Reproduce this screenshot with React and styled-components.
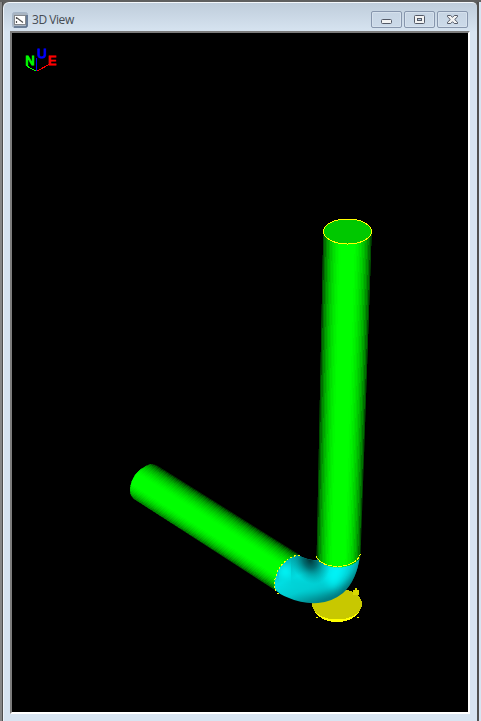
import React from "react";
import styled, { createGlobalStyle } from "styled-components";

const Global = createGlobalStyle`
  * { box-sizing: border-box; }
  body { margin: 0; background: #d7e4f1; overflow: hidden; }
`;

const Desktop = styled.div`
  display: grid;
  grid-template-columns: 3px 474px 2px 2px;
  width: 481px;
  height: 721px;
  padding-top: 2px;
  background: #5f5f5f;
`;

const Edge = styled.div`
  background: ${(p) => p.$fill};
`;

const Window = styled.section`
  display: flex;
  flex-direction: column;
  height: 719px;
  padding: 0 7px 0 6px;
  border-top: 1px solid #f4f8fc;
  border-left: 1px solid #eef3f9;
  border-radius: 6px 5px 0 0;
  background: linear-gradient(#bfcddb 0, #d7e4f1 29px);
`;

const TitleBar = styled.header`
  display: flex;
  align-items: center;
  height: 28px;
  padding: 5px 2px 0;
`;

const Title = styled.h1`
  flex: 1;
  margin: 0 0 0 4px;
  font: 400 12px/16px "Open Sans", "Noto Sans", sans-serif;
  letter-spacing: -0.45px;
  color: #454c54;
`;

const Controls = styled.div`
  display: flex;
  gap: 2px;
`;

const ControlButton = styled.button`
  display: grid;
  place-items: center;
  width: 31px;
  height: 17px;
  padding: ${(p) => p.$top || 0}px 0 0;
  border: 1px solid #8796ad;
  border-radius: 2px;
  background: linear-gradient(#c7d5e4, #ccdae9);
  box-shadow: inset 0 0 0 1px #d6e1ed;
`;

const Viewport = styled.main`
  width: 460px;
  height: 683px;
  border: 2px solid;
  border-color: #7c7c7c #fff #fff #7c7c7c;
  background: #000;
`;

const Scene = styled.svg`
  display: block;
  width: 456px;
  height: 679px;
`;

const AxisLabel = styled.text`
  font: ${(p) => p.$weight || 400} 13px "DejaVu Sans", sans-serif;
  fill: ${(p) => p.$color};
  stroke: ${(p) => p.$color};
  stroke-width: 0.8px;
`;

const mix = (a, b, t) => a + (b - a) * t;

/* Shaded cylinder, built from lengthwise strips that follow its taper. */
function Pipe({ start, end, low, peak }) {
  const count = 32;
  const strips = Array.from({ length: count }, (_, i) => {
    const a = i / count;
    const b = Math.min(1, (i + 1.4) / count);
    const m = (i + 0.5) / count;
    const d = m < peak ? (peak - m) / peak : (m - peak) / (1 - peak);
    const light = Math.min(1, 1.04 * Math.max(0, 1 - d ** 2.2) ** 0.68);
    const g = Math.round(low + (255 - low) * light);
    const at = (edge, t) => `${mix(edge[0], edge[2], t)},${mix(edge[1], edge[3], t)}`;
    return (
      <polygon
        key={i}
        points={[at(start, a), at(start, b), at(end, b), at(end, a)].join(" ")}
        fill={`rgb(0,${g},0)`}
      />
    );
  });
  return <g shapeRendering="crispEdges">{strips}</g>;
}

function AppIcon() {
  return (
    <svg width="16" height="16" viewBox="0 0 16 16" aria-hidden="true">
      <rect x=".5" y=".5" width="15" height="15" rx="2" fill="#a9b5c2" stroke="#a5b5c7" />
      <path d="M2 15h12l1-1V3" fill="none" stroke="#596f8c" strokeWidth="1.6" />
      <rect x="2.500" y="3.500" width="11" height="9" fill="#fff" stroke="#85898e" />
      <path d="M4.500 5v2M5 6l6 4.500M4.500 9v2" fill="none" stroke="#555" strokeWidth="1.2" />
    </svg>
  );
}

function MinimizeIcon() {
  return (
    <svg width="11" height="5" viewBox="0 0 11 5">
      <rect x=".5" y=".5" width="10" height="4" rx="1" fill="#f3f3f3" stroke="#535966" />
    </svg>
  );
}

function MaximizeIcon() {
  return (
    <svg width="11" height="9" viewBox="0 0 11 9">
      <rect x=".5" y=".5" width="10" height="8" rx="1" fill="#f3f3f3" stroke="#535966" />
      <rect x="3.5" y="3.5" width="4" height="2" fill="#b8cbe1" stroke="#535966" />
    </svg>
  );
}

function CloseIcon() {
  return (
    <svg width="11" height="9" viewBox="0 0 11 9">
      <path
        d="M.5.5h3.200L5.500 2.300 7.300.5h3.200v1.300L7.700 4.500l2.800 2.700v1.300H7.300L5.500 6.700 3.700 8.500H.5V7.200l2.800-2.700L.5 1.800Z"
        fill="#f3f3f3"
        stroke="#535966"
      />
    </svg>
  );
}

function PipeModel() {
  return (
    <Scene viewBox="12 33 456 679" aria-label="3D pipe model">
      <defs>
        <clipPath id="leftPipe">
          <path d="M150 464Q155 464 158 466L300 555Q276 562 275 590L134 499Q130 496 130 490Q131 472 150 464Z" />
        </clipPath>
        <clipPath id="standPipe">
          <path d="M323 232H372L360.500 556C356 571 321 571 316.500 556.500Z" />
        </clipPath>
        <clipPath id="elbow">
          <path d="M298 555Q278 561 274.500 582L275 589Q278 594 289 598Q302 604 318 603Q332 602 343 593Q357 580 360 555H317V560Q309 561 298 555Z" />
        </clipPath>
        <linearGradient id="elbowBase" gradientUnits="userSpaceOnUse" x1="292" y1="560" x2="310" y2="606">
          <stop offset="0" stopColor="#00b4b8" />
          <stop offset=".35" stopColor="#00e0e4" />
          <stop offset=".65" stopColor="#00ccd0" />
          <stop offset="1" stopColor="#007f84" />
        </linearGradient>
        <radialGradient id="crease">
          <stop offset="0" stopColor="#00373a" />
          <stop offset=".35" stopColor="#005c60" stopOpacity=".85" />
          <stop offset="1" stopColor="#009ca0" stopOpacity="0" />
        </radialGradient>
        <filter id="soft" x="-100%" y="-100%" width="300%" height="300%">
          <feGaussianBlur stdDeviation="4" />
        </filter>
      </defs>

      <g fill="none" shapeRendering="crispEdges">
        <path d="M26 65l4 3 6 3" stroke="#0f0" />
        <path d="M37 71l13-7" stroke="#f00" />
        <path d="M36.500 58v13" stroke="#00f" />
      </g>
      <AxisLabel x="25" y="65" $color="#00ff00" textLength="10" lengthAdjust="spacingAndGlyphs">N</AxisLabel>
      <AxisLabel x="37" y="57.5" $color="#0000ff" textLength="10" lengthAdjust="spacingAndGlyphs">U</AxisLabel>
      <AxisLabel x="47.500" y="65" $color="#ff0000" textLength="9" lengthAdjust="spacingAndGlyphs">E</AxisLabel>

      <g shapeRendering="crispEdges">
        <path d="M312 604c1 11 12 18 25 18s24-7 25-18Z" fill="#ff0" />
        <ellipse cx="337" cy="604" rx="25" ry="15.500" fill="#c8c800" />
        <path d="M353 590h2v-2h2v2h2v5h-6Z" fill="#d8d800" />
        <path d="M316 617.500h2M357 617.500h2" stroke="#ff0" />
      </g>

      <g clipPath="url(#leftPipe)">
        <Pipe start={[144, 457, 116, 490.5]} end={[307, 559, 279, 594]} low={15} peak={0.56} />
      </g>

      <g clipPath="url(#elbow)">
        <rect x="270" y="550" width="95" height="60" fill="url(#elbowBase)" />
        <path d="M281 574Q298 590 320 587Q345 582 350 562" fill="none" stroke="#00d0d5" strokeWidth="8" filter="url(#soft)" />
        <path d="M339 562Q338 575 328 582" fill="none" stroke="#00f4f8" strokeWidth="15" filter="url(#soft)" />
        <path d="M283 565L287 577" fill="none" stroke="#00ffff" strokeWidth="11" filter="url(#soft)" />
        <ellipse cx="310" cy="560" rx="19" ry="25" fill="url(#crease)" transform="rotate(-25 310 560)" />
        <path d="M363 556Q361 580 345 596" fill="none" stroke="#005d60" strokeWidth="7" filter="url(#soft)" />
      </g>

      <g clipPath="url(#standPipe)">
        <Pipe start={[323, 232, 372, 232]} end={[316, 570, 360.5, 570]} low={40} peak={0.5} />
      </g>
      <g fill="none" stroke="#ff0" shapeRendering="crispEdges">
        <ellipse cx="347.500" cy="231.5" rx="24" ry="12.500" fill="#00c800" />
        <path d="M316.500 556.500C321 570 356 570 360.500 554" strokeDasharray="4 1" />
        <path d="M300 555.500h-4Q278 561 274.500 582v7l4 5" strokeDasharray="2 2" />
      </g>
    </Scene>
  );
}

export default function App() {
  return (
    <>
      <Global />
      <Desktop>
        <Edge $fill="linear-gradient(90deg, #858585 2px, #4d4d4d 2px)" />
        <Window>
          <TitleBar>
            <AppIcon />
            <Title>3D View</Title>
            <Controls>
              <ControlButton $top={4} aria-label="Minimize"><MinimizeIcon /></ControlButton>
              <ControlButton aria-label="Maximize"><MaximizeIcon /></ControlButton>
              <ControlButton aria-label="Close"><CloseIcon /></ControlButton>
            </Controls>
          </TitleBar>
          <Viewport>
            <PipeModel />
          </Viewport>
        </Window>
        <Edge $fill="#505050" />
        <Edge $fill="#d7e4f1" />
      </Desktop>
    </>
  );
}
